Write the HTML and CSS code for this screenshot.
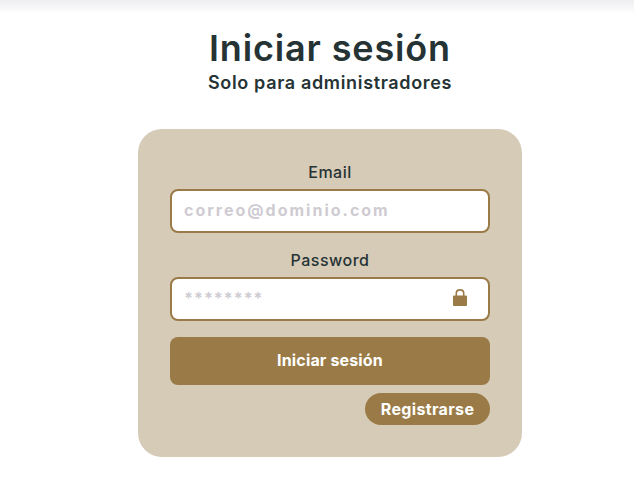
FILE: index.html
```html
<!DOCTYPE html>
<html lang="es">
<head>
    <meta charset="UTF-8">
    <meta name="viewport" content="width=device-width, initial-scale=1.0">
    <title>Iniciar sesión</title>
    <link rel="stylesheet" href="styles.css">
</head>
<body>

<div class="top-shadow"></div>

<div class="container">
    <h1>Iniciar sesión</h1>
    <p class="subtitle">Solo para administradores</p>

    <form class="card">
        <label class="field-label" for="email">Email</label>
        <input class="field email-field" id="email" type="text" placeholder="correo@dominio.com">

        <label class="field-label" for="password">Password</label>
        <div class="password-wrap">
            <input class="field password-field" id="password" type="password" placeholder="********">
            <svg class="lock" viewBox="0 0 14 17" width="14" height="17" aria-hidden="true">
                <path class="lock-body" d="M1.200 6.500h11.600c.7 0 1.200.5 1.200 1.200v8c0 .8-.5 1.300-1.200 1.300H1.200C.5 17 0 16.500 0 15.700v-8c0-.7.5-1.200 1.200-1.200z"/>
                <path class="lock-shackle" d="M3.300 7.500V4.300C3.300 2.200 4.800.9 7 .9s3.700 1.300 3.700 3.400v3.200"/>
            </svg>
        </div>

        <button class="btn-login" type="button">Iniciar sesión</button>
        <div class="register-row">
            <button class="btn-register" type="button">Registrarse</button>
        </div>
    </form>
</div>

</body>
</html>
```

FILE: styles.css
```css
* {
    box-sizing: border-box;
}

body {
    margin: 0;
    background-color: #fff;
    font-family: Inter, "Noto Sans", sans-serif;
    color: #263335;
}

.top-shadow {
    height: 14px;
    background: linear-gradient(#eeedf0, #fff);
}

.container {
    display: flex;
    flex-direction: column;
    align-items: center;
    padding-left: 26px;
}

h1 {
    margin: 11px 0 0;
    font-size: 36px;
    line-height: 46px;
    font-weight: 600;
    letter-spacing: 0.85px;
    color: #263335;
}

.subtitle {
    margin: -1px 0 0;
    font-size: 18px;
    line-height: 25px;
    font-weight: 600;
    letter-spacing: 0.66px;
}

.card {
    display: flex;
    flex-direction: column;
    width: 384px;
    height: 328px;
    margin-top: 34px;
    padding: 32px;
    background-color: #d6cbb7;
    border-radius: 24px;
}

.field-label {
    font-size: 16px;
    line-height: 22px;
    font-weight: 500;
    letter-spacing: 0.5px;
    text-align: center;
    margin-bottom: 6px;
}

.field {
    display: block;
    width: 100%;
    height: 44px;
    margin-bottom: 16px;
    padding: 0 12px;
    border: 2px solid #9a7b47;
    border-radius: 8px;
    background-color: #fff;
    font-family: inherit;
    outline: none;
}

.email-field::placeholder {
    color: #cfcbd2;
    opacity: 1;
    font-size: 16px;
    font-weight: 700;
    letter-spacing: 2px;
}

.password-wrap {
    position: relative;
}

.password-field::placeholder {
    color: #cfcbd2;
    opacity: 1;
}

.password-field {
    font-size: 16px;
    font-weight: 700;
    letter-spacing: 1px;
    padding-bottom: 3px;
}

.lock {
    position: absolute;
    top: 12px;
    right: 23px;
}

.lock-body {
    fill: #9a7b47;
}

.lock-shackle {
    fill: none;
    stroke: #9a7b47;
    stroke-width: 1.6;
}

.btn-login {
    height: 48px;
    padding-bottom: 4px;
    border: none;
    border-radius: 8px;
    background-color: #9a7b47;
    color: #fff;
    font-family: inherit;
    font-size: 16px;
    font-weight: 700;
    letter-spacing: 0.15px;
    cursor: pointer;
}

.register-row {
    display: flex;
    justify-content: flex-end;
    margin-top: 8px;
}

.btn-register {
    width: 125px;
    height: 32px;
    padding: 0;
    border: none;
    border-radius: 16px;
    background-color: #9a7b47;
    color: #fff;
    font-family: inherit;
    font-size: 16px;
    font-weight: 700;
    letter-spacing: 0.35px;
    cursor: pointer;
}
```
